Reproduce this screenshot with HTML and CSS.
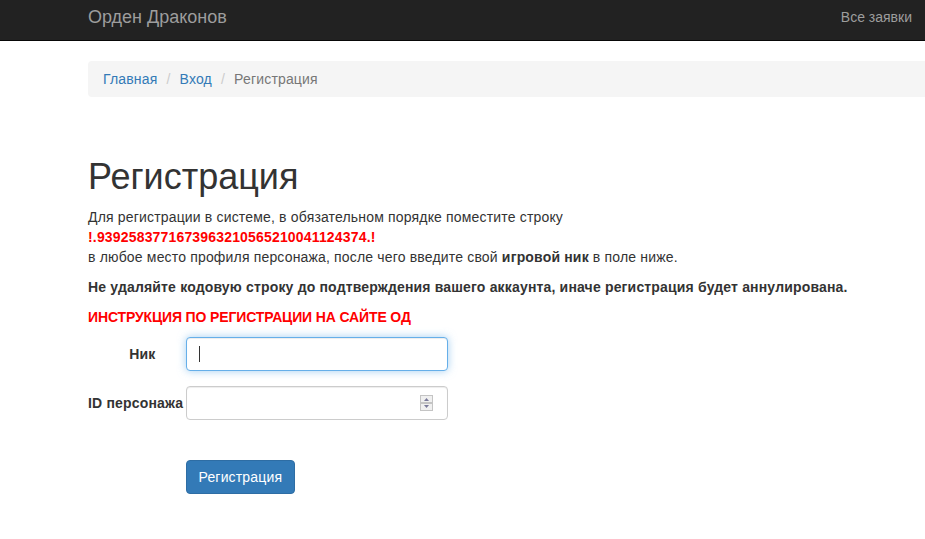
FILE: index.html
```html
<!DOCTYPE html>
<html lang="ru">
<head>
    <meta charset="UTF-8">
    <meta name="viewport" content="width=device-width, initial-scale=1.0">
    <title>Регистрация - Орден Драконов</title>
    <link rel="stylesheet" href="styles.css">
</head>
<body>

    <!-- Верхняя панель -->
    <div class="navbar">
        <a class="navbar-brand" href="#">Орден Драконов</a>
        <a class="navbar-link" href="#">Все заявки</a>
    </div>

    <div class="container">
        <!-- Хлебные крошки -->
        <ol class="breadcrumb">
            <li><a href="#">Главная</a></li>
            <li><a href="#">Вход</a></li>
            <li class="active">Регистрация</li>
        </ol>

        <h1>Регистрация</h1>
        <p>
            Для регистрации в системе, в обязательном порядке поместите строку<br>
            <b class="code">!.9392583771673963210565210041124374.!</b><br>
            в любое место профиля персонажа, после чего введите свой <b>игровой ник</b> в поле ниже.
        </p>
        <p><b>Не удаляйте кодовую строку до подтверждения вашего аккаунта, иначе регистрация будет аннулирована.</b></p>
        <p><a class="guide" href="#">ИНСТРУКЦИЯ ПО РЕГИСТРАЦИИ НА САЙТЕ ОД</a></p>

        <!-- Форма -->
        <form class="form-horizontal">
            <div class="form-group">
                <label class="control-label" for="nick">Ник</label>
                <div class="field">
                    <input class="form-control focused" id="nick" type="text">
                    <span class="caret"></span>
                </div>
            </div>
            <div class="form-group">
                <label class="control-label" for="charid">ID персонажа</label>
                <div class="field">
                    <input class="form-control" id="charid" type="text">
                    <svg class="spinner" width="13" height="16" viewBox="0 0 13 16">
                        <rect x="0.5" y="0.5" width="12" height="7" fill="#f0f0f0" stroke="#c4c4c4"/>
                        <rect x="0.5" y="8.5" width="12" height="7" fill="#f0f0f0" stroke="#c4c4c4"/>
                        <path d="M4 6 L6.5 3 L9 6 Z" fill="#7a7a9a"/>
                        <path d="M4 10 L6.5 13 L9 10 Z" fill="#7a7a9a"/>
                    </svg>
                </div>
            </div>
            <div class="form-group actions">
                <div></div>
                <div class="field">
                    <button class="btn-primary" type="button">Регистрация</button>
                </div>
            </div>
        </form>
    </div>

</body>
</html>
```

FILE: styles.css
```css
/* Общие стили */
html, body {
    overflow-x: hidden;
}

body {
    margin: 0;
    font-family: "Liberation Sans", Arial, sans-serif;
    font-size: 14px;
    line-height: 20px;
    letter-spacing: 0.17px;
    color: #333;
    background: #fff;
}

a {
    color: #337ab7;
    text-decoration: none;
}

/* Верхняя панель */
.navbar {
    display: flex;
    justify-content: space-between;
    align-items: flex-start;
    height: 41px;
    padding: 7px 13px 0 88px;
    box-sizing: border-box;
    background: #222;
    border-bottom: 1px solid #080808;
    letter-spacing: 0;
}

.navbar-brand {
    font-size: 18px;
    line-height: 20px;
    color: #9d9d9d;
}

.navbar-link {
    color: #9d9d9d;
}

/* Контейнер */
.container {
    width: 1170px;
    margin-left: 73px;
    padding: 0 15px;
    box-sizing: border-box;
}

/* Хлебные крошки */
.breadcrumb {
    display: flex;
    list-style: none;
    margin: 20px 0 20px;
    padding: 8px 15px;
    background: #f5f5f5;
    border-radius: 4px;
}

.breadcrumb li + li {
    margin-left: 4px;
}

.breadcrumb li + li:before {
    content: "/\00a0";
    padding: 0 5px;
    color: #ccc;
}

.breadcrumb .active {
    color: #777;
}

h1 {
    margin: 60px 0 10px;
    font-size: 36px;
    font-weight: 500;
    line-height: 1.1;
    letter-spacing: 0;
}

p {
    margin: 0 0 10px;
}

.code {
    color: #f00;
}

.guide {
    color: #f00;
    font-weight: bold;
    letter-spacing: -0.14px;
}

/* Форма */
.form-group {
    display: grid;
    grid-template-columns: 97.5px 292.5px;
    margin: 0 -15px 15px;
}

.form-group > * {
    padding: 0 15px;
}

.control-label {
    padding-top: 7px;
    text-align: right;
    font-weight: bold;
    white-space: nowrap;
}

.field {
    position: relative;
}

.form-control {
    display: block;
    width: 100%;
    height: 34px;
    padding: 6px 12px;
    box-sizing: border-box;
    font-family: inherit;
    font-size: 14px;
    color: #555;
    background: #fff;
    border: 1px solid #ccc;
    border-radius: 4px;
    box-shadow: inset 0 1px 1px rgba(0, 0, 0, 0.075);
    outline: none;
}

.form-control.focused {
    border-color: #66afe9;
    box-shadow: inset 0 1px 1px rgba(0, 0, 0, 0.075), 0 0 8px rgba(102, 175, 233, 0.6);
}

.caret {
    position: absolute;
    left: 28px;
    top: 9px;
    width: 1px;
    height: 16px;
    background: #333;
}

.spinner {
    position: absolute;
    right: 30px;
    top: 9px;
}

.actions {
    padding-top: 25px;
}

.btn-primary {
    height: 34px;
    padding: 6px 12px;
    font-family: inherit;
    font-size: 14px;
    line-height: 20px;
    letter-spacing: 0.17px;
    color: #fff;
    background: #337ab7;
    border: 1px solid #2e6da4;
    border-radius: 4px;
    cursor: pointer;
}
```
